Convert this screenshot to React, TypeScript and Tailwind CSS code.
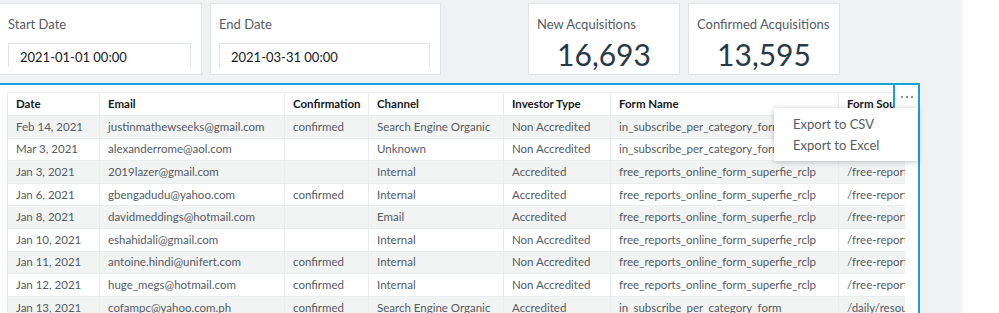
import React from 'react';

interface Row {
  date: string;
  email: string;
  confirmation: string;
  channel: string;
  investor: string;
  form: string;
  source: string;
}

const rows: Row[] = [
  { date: 'Feb 14, 2021', email: 'justinmathewseeks@gmail.com', confirmation: 'confirmed', channel: 'Search Engine Organic', investor: 'Non Accredited', form: 'in_subscribe_per_category_form', source: '/daily/resources/' },
  { date: 'Mar 3, 2021', email: 'alexanderrome@aol.com', confirmation: '', channel: 'Unknown', investor: 'Non Accredited', form: 'in_subscribe_per_category_form', source: '/daily/resources/' },
  { date: 'Jan 3, 2021', email: '2019lazer@gmail.com', confirmation: '', channel: 'Internal', investor: 'Accredited', form: 'free_reports_online_form_superfie_rclp', source: '/free-reports/' },
  { date: 'Jan 6, 2021', email: 'gbengadudu@yahoo.com', confirmation: 'confirmed', channel: 'Internal', investor: 'Accredited', form: 'free_reports_online_form_superfie_rclp', source: '/free-reports/' },
  { date: 'Jan 8, 2021', email: 'davidmeddings@hotmail.com', confirmation: '', channel: 'Email', investor: 'Accredited', form: 'free_reports_online_form_superfie_rclp', source: '/free-reports/' },
  { date: 'Jan 10, 2021', email: 'eshahidali@gmail.com', confirmation: '', channel: 'Internal', investor: 'Non Accredited', form: 'free_reports_online_form_superfie_rclp', source: '/free-reports/' },
  { date: 'Jan 11, 2021', email: 'antoine.hindi@unifert.com', confirmation: 'confirmed', channel: 'Internal', investor: 'Non Accredited', form: 'free_reports_online_form_superfie_rclp', source: '/free-reports/' },
  { date: 'Jan 12, 2021', email: 'huge_megs@hotmail.com', confirmation: 'confirmed', channel: 'Internal', investor: 'Non Accredited', form: 'free_reports_online_form_superfie_rclp', source: '/free-reports/' },
  { date: 'Jan 13, 2021', email: 'cofampc@yahoo.com.ph', confirmation: 'confirmed', channel: 'Search Engine Organic', investor: 'Accredited', form: 'in_subscribe_per_category_form', source: '/daily/resources/' },
];

const columns = [
  { label: 'Date', w: 'w-[92px]' },
  { label: 'Email', w: 'w-[185px]' },
  { label: 'Confirmation', w: 'w-[84px]' },
  { label: 'Channel', w: 'w-[135px]' },
  { label: 'Investor Type', w: 'w-[107px]' },
  { label: 'Form Name', w: 'w-[228px]' },
  { label: 'Form Source', w: 'w-[130px]' },
];

const cell = 'border border-[#eaeded] px-[8px] whitespace-nowrap overflow-hidden';

const DateCard: React.FC<{ label: string; value: string; w: string; className?: string }> = ({ label, value, w, className }) => (
  <div className={`${w} h-[72px] bg-white border border-[#e1e4e6] overflow-hidden pl-[8px] pt-[10px] ${className ?? ''}`}>
    <div className="text-[13px] text-[#545b64] leading-[20px]">{label}</div>
    <div className="mt-[9px] mr-[10px] h-[24px] overflow-hidden">
      <div className="h-[30px] border border-[#e3e6e8] pl-[11px] pt-[3px] text-[13px] text-[#16191f] leading-[20px]">
        {value}
      </div>
    </div>
  </div>
);

const KpiCard: React.FC<{ label: string; value: string; className?: string }> = ({ label, value, className }) => (
  <div className={`w-[152px] h-[72px] bg-white border border-[#e1e4e6] pt-[10px] ${className ?? ''}`}>
    <div className="pl-[8px] text-[13px] text-[#545b64] leading-[20px] whitespace-nowrap">{label}</div>
    <div className="mt-[2px] text-center text-[30px] leading-[36px] text-[#2b3a48]">{value}</div>
  </div>
);

const App: React.FC = () => {
  return (
    <div className="flex h-[313px] w-[999px] overflow-hidden bg-white" style={{ fontFamily: 'Lato, "Open Sans", sans-serif' }}>
      <div className="w-[962px] shrink-0 bg-[#eff1f3]">
        <div className="flex pt-[3px]">
          <DateCard label="Start Date" value="2021-01-01 00:00" w="w-[203px]" className="-ml-px" />
          <DateCard label="End Date" value="2021-03-31 00:00" w="w-[231px]" className="ml-[8px]" />
          <KpiCard label="New Acquisitions" value="16,693" className="ml-[87px]" />
          <KpiCard label="Confirmed Acquisitions" value="13,595" className="ml-[8px]" />
        </div>

        <div className="relative mt-[8px] w-[920px] h-[240px] bg-white border-t-2 border-r-2 border-[#16a3da] pl-[7px] pt-[7px]">
          <div className="w-[898px] overflow-hidden">
            <table className="table-fixed border-collapse w-[961px] text-[11.5px] leading-[14px]">
              <colgroup>
                {columns.map(c => (
                  <col key={c.label} className={c.w} />
                ))}
              </colgroup>
              <thead>
                <tr className="h-[23px] bg-white">
                  {columns.map(c => (
                    <th key={c.label} className={`${cell} text-left font-bold text-[#16191f]`}>
                      {c.label}
                    </th>
                  ))}
                </tr>
              </thead>
              <tbody>
                {rows.map((r, i) => (
                  <tr key={i} className={`h-[22.6px] ${i % 2 === 0 ? 'bg-[#f2f3f3]' : 'bg-white'} text-[#545b64]`}>
                    <td className={cell}>{r.date}</td>
                    <td className={cell}>{r.email}</td>
                    <td className={cell}>{r.confirmation}</td>
                    <td className={cell}>
                      <div className="max-w-[114px] truncate">{r.channel}</div>
                    </td>
                    <td className={cell}>{r.investor}</td>
                    <td className={cell}>{r.form}</td>
                    <td className={cell}>{r.source}</td>
                  </tr>
                ))}
              </tbody>
            </table>
          </div>

          <div className="absolute right-0 top-0 w-[25px] h-[24px] border-l-2 border-[#16a3da] bg-white flex items-center justify-center">
            <svg width="14" height="4" viewBox="0 0 14 4" fill="#879596">
              <circle cx="2" cy="2" r="1.2" />
              <circle cx="7" cy="2" r="1.2" />
              <circle cx="12" cy="2" r="1.2" />
            </svg>
          </div>

          <div className="absolute left-[774px] top-[23px] w-[144px] h-[53px] bg-white shadow-[0_1px_6px_rgba(0,28,36,0.25)] pt-[6px] text-[13px] text-[#545b64]">
            <div className="pl-[19px] h-[21px] leading-[21px]">Export to CSV</div>
            <div className="pl-[19px] h-[21px] leading-[21px]">Export to Excel</div>
          </div>
        </div>
      </div>
      <div className="flex-1 bg-white" />
    </div>
  );
};

export default App;
